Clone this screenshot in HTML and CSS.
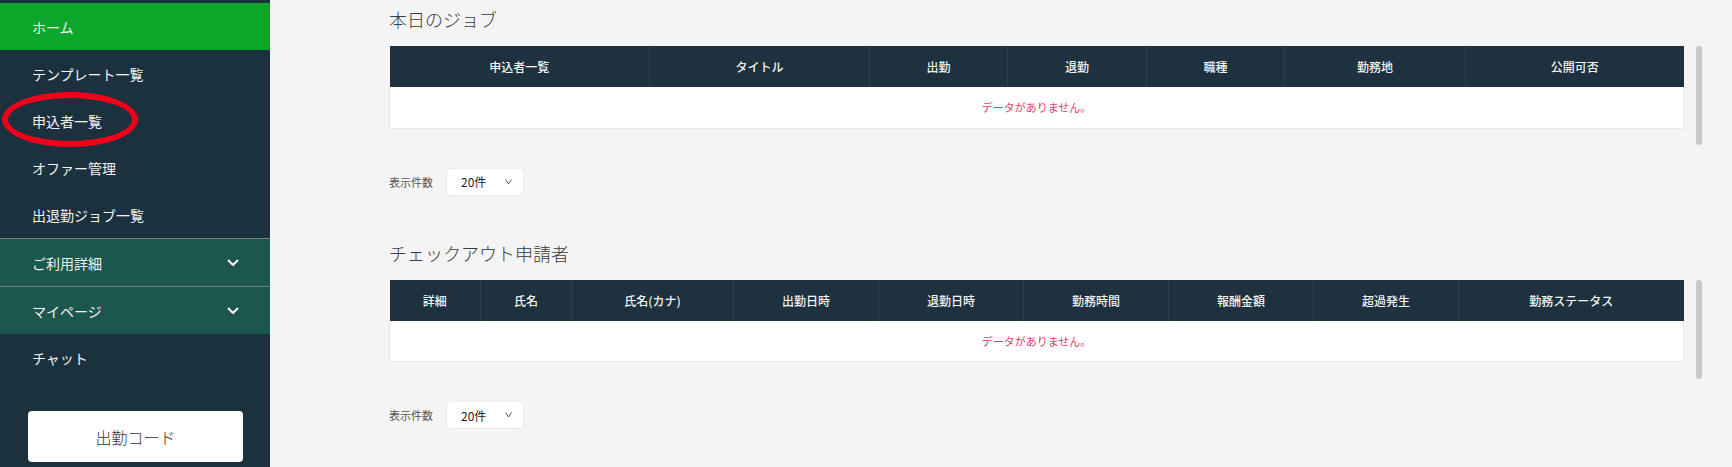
FILE: index.html
```html
<!DOCTYPE html>
<html lang="ja">
<head>
<meta charset="utf-8">
<title>ホーム</title>
<link rel="stylesheet" href="styles.css">
</head>
<body>
<div class="layout">
  <aside class="sidebar">
    <nav class="nav">
      <a class="nav-item active">ホーム</a>
      <a class="nav-item">テンプレート一覧</a>
      <a class="nav-item marked">申込者一覧<span class="circle"></span></a>
      <a class="nav-item">オファー管理</a>
      <a class="nav-item">出退勤ジョブ一覧</a>
      <a class="nav-item group">ご利用詳細
        <svg class="chev" width="12" height="7" viewBox="0 0 12 7"><path d="M1 1 L6 6 L11 1" fill="none" stroke="#fff" stroke-width="2"/></svg>
      </a>
      <a class="nav-item group">マイページ
        <svg class="chev" width="12" height="7" viewBox="0 0 12 7"><path d="M1 1 L6 6 L11 1" fill="none" stroke="#fff" stroke-width="2"/></svg>
      </a>
      <a class="nav-item">チャット</a>
    </nav>
    <div class="code-btn">出勤コード</div>
  </aside>

  <main class="main">
    <section class="section">
      <h2 class="title">本日のジョブ</h2>
      <div class="table-row">
        <table class="grid">
          <colgroup>
            <col style="width:260px"><col style="width:220px"><col style="width:138px"><col style="width:139px"><col style="width:138px"><col style="width:181px"><col>
          </colgroup>
          <thead>
            <tr><th>申込者一覧</th><th>タイトル</th><th>出勤</th><th>退勤</th><th>職種</th><th>勤務地</th><th>公開可否</th></tr>
          </thead>
          <tbody>
            <tr><td colspan="7" class="empty">データがありません。</td></tr>
          </tbody>
        </table>
        <div class="vscroll"></div>
      </div>
      <div class="pager">
        <span class="pager-label">表示件数</span>
        <div class="select">20件
          <svg class="select-chev" width="7" height="6" viewBox="0 0 7 6"><path d="M0.5 0.5 L3.5 5 L6.5 0.5" fill="none" stroke="#555" stroke-width="1"/></svg>
        </div>
      </div>
    </section>

    <section class="section second">
      <h2 class="title">チェックアウト申請者</h2>
      <div class="table-row">
        <table class="grid">
          <colgroup>
            <col style="width:91px"><col style="width:91px"><col style="width:162px"><col style="width:145px"><col style="width:145px"><col style="width:145px"><col style="width:145px"><col style="width:145px"><col>
          </colgroup>
          <thead>
            <tr><th>詳細</th><th>氏名</th><th>氏名(カナ)</th><th>出勤日時</th><th>退勤日時</th><th>勤務時間</th><th>報酬金額</th><th>超過発生</th><th>勤務ステータス</th></tr>
          </thead>
          <tbody>
            <tr><td colspan="9" class="empty">データがありません。</td></tr>
          </tbody>
        </table>
        <div class="vscroll"></div>
      </div>
      <div class="pager">
        <span class="pager-label">表示件数</span>
        <div class="select">20件
          <svg class="select-chev" width="7" height="6" viewBox="0 0 7 6"><path d="M0.5 0.5 L3.5 5 L6.5 0.5" fill="none" stroke="#555" stroke-width="1"/></svg>
        </div>
      </div>
    </section>
  </main>
</div>
</body>
</html>
```

FILE: styles.css
```css
* { box-sizing: border-box; }

html, body {
  margin: 0;
  padding: 0;
  height: 100%;
  overflow: hidden;
}

body {
  font-family: "Noto Sans CJK JP", "Noto Sans", sans-serif;
  background: #f4f4f4;
  color: #333;
}

.layout {
  display: flex;
  height: 467px;
}

.sidebar {
  width: 270px;
  flex: 0 0 270px;
  background: #1b313d;
  padding-top: 3px;
  display: flex;
  flex-direction: column;
}

.nav {
  display: flex;
  flex-direction: column;
}

.nav-item {
  position: relative;
  display: flex;
  align-items: center;
  justify-content: space-between;
  height: 47px;
  padding: 0 31px 0 32px;
  font-size: 14px;
  color: #f2f2f2;
  text-decoration: none;
}

.nav-item.active {
  background: #0ba62a;
}

.nav-item.group {
  background: #1b574c;
  height: 48px;
  border-top: 1px solid #72817d;
}

.chev {
  display: block;
}

.circle {
  position: absolute;
  left: 2px;
  top: -5px;
  width: 136px;
  height: 55px;
  border: 6px solid #f2001b;
  border-radius: 50%;
  pointer-events: none;
}

.code-btn {
  margin: 30px 27px 0 28px;
  height: 51px;
  background: #fff;
  border-radius: 4px;
  display: flex;
  align-items: center;
  justify-content: center;
  font-size: 16px;
  font-weight: 300;
  color: #333;
}

.main {
  flex: 1;
  padding: 6px 30px 0 119px;
  background: #f4f4f4;
}

.title {
  margin: 0;
  font-size: 18px;
  line-height: 27px;
  font-weight: 300;
  color: #3a3a3a;
}

.table-row {
  display: flex;
  align-items: flex-start;
  margin-top: 13px;
}

.grid {
  flex: 1;
  border-collapse: collapse;
  table-layout: fixed;
  width: 1295px;
}

.grid th {
  background: #1d323e;
  color: #f4f4f4;
  font-size: 12px;
  font-weight: 500;
  height: 41px;
  padding: 0;
  text-align: center;
  border-left: 1px solid #2f4049;
}

.grid th:first-child {
  border-left: none;
}

.grid td.empty {
  background: #fff;
  height: 41px;
  border: 1px solid #e7e7e7;
  border-top: none;
  text-align: center;
  font-size: 11px;
  font-weight: 400;
  color: #e33c64;
  padding: 0;
}

.vscroll {
  width: 6px;
  height: 99px;
  margin-left: 12px;
  margin-bottom: -17px;
  flex: 0 0 6px;
  background: #c9c9c9;
  border-radius: 3px;
}

.pager {
  display: flex;
  align-items: center;
  margin-top: 39px;
}

.pager-label {
  font-size: 11px;
  color: #555;
  width: 57px;
}

.select {
  position: relative;
  width: 78px;
  height: 28px;
  background: #fff;
  border: 1px solid #ececec;
  border-radius: 5px;
  font-size: 12px;
  font-weight: 400;
  color: #222;
  display: flex;
  align-items: center;
  padding-left: 14px;
}

.select-chev {
  position: absolute;
  right: 11px;
  top: 10px;
}

.second {
  margin-top: 44px;
}
```
